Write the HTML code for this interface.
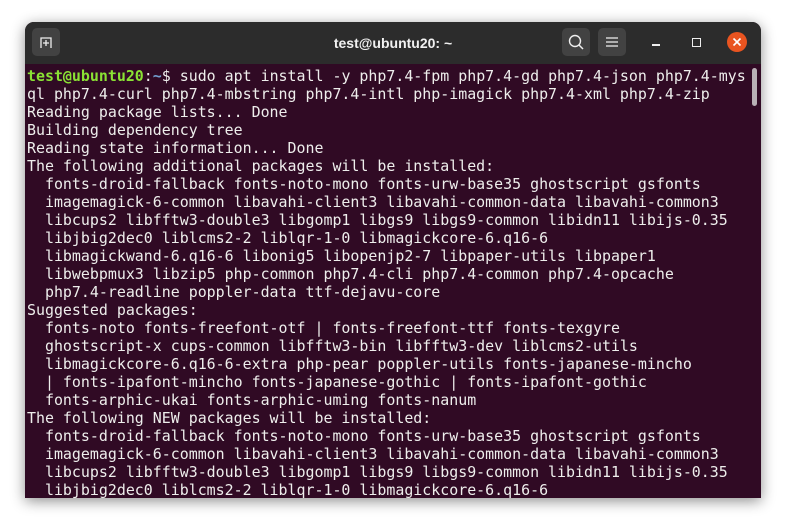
<!DOCTYPE html>
<html><head><style>
html,body{margin:0;padding:0;width:786px;height:527px;background:#fff;overflow:hidden}
.win{position:absolute;left:25px;top:22px;width:736px;height:476px;border-radius:9px 9px 0 0;overflow:hidden;box-shadow:0 3px 14px rgba(0,0,0,.45);background:#300a24}
.tb{height:42px;background:#2c2c2c;position:relative;color:#f2f2f2;font:bold 14px "Liberation Sans",sans-serif}
.title{position:absolute;left:0;right:0;top:13px;text-align:center}
.btn{position:absolute;top:6px;width:28px;height:28px;border-radius:5px;background:#424242}
pre{margin:0;position:absolute;left:2px;top:45px;font:14.93px/18px "DejaVu Sans Mono",monospace;color:#eeeeec;white-space:pre}
.g{color:#8ae234;font-weight:bold}.b{color:#729fcf;font-weight:bold}
.sb{position:absolute;left:727px;top:46px;width:5px;height:38px;border-radius:3px;background:#b8b0b5}
</style></head><body>
<div class="win">
<div class="tb">
<div class="btn" style="left:7px"><svg width="28" height="28"><path d="M9 20V10h10v10" fill="none" stroke="#eee" stroke-width="1.3"/><path d="M14 12v6M11 15h6" stroke="#eee" stroke-width="1.3"/></svg></div>
<div class="title">test@ubuntu20: ~</div>
<div class="btn" style="left:537px"><svg width="28" height="28"><circle cx="13" cy="13" r="5.5" fill="none" stroke="#eee" stroke-width="1.4"/><path d="M17 17l4 4" stroke="#eee" stroke-width="1.5"/></svg></div>
<div class="btn" style="left:573px"><svg width="28" height="28"><path d="M8 10h12M8 14h12M8 18h12" stroke="#eee" stroke-width="1.3"/></svg></div>
<div style="position:absolute;left:627px;top:22px;width:8px;height:1.5px;background:#eee"></div>
<div style="position:absolute;left:667px;top:16px;width:7px;height:7px;border:1.3px solid #eee"></div>
<div style="position:absolute;left:702px;top:10px;width:20px;height:20px;border-radius:50%;background:#e95420"><svg width="20" height="20"><path d="M6.5 6.5l7 7M13.5 6.5l-7 7" stroke="#fff" stroke-width="1.6"/></svg></div>
</div>
<div class="sb"></div>
<pre><span class="g">test@ubuntu20</span>:<span class="b">~</span>$ sudo apt install -y php7.4-fpm php7.4-gd php7.4-json php7.4-mys
ql php7.4-curl php7.4-mbstring php7.4-intl php-imagick php7.4-xml php7.4-zip
Reading package lists... Done
Building dependency tree
Reading state information... Done
The following additional packages will be installed:
  fonts-droid-fallback fonts-noto-mono fonts-urw-base35 ghostscript gsfonts
  imagemagick-6-common libavahi-client3 libavahi-common-data libavahi-common3
  libcups2 libfftw3-double3 libgomp1 libgs9 libgs9-common libidn11 libijs-0.35
  libjbig2dec0 liblcms2-2 liblqr-1-0 libmagickcore-6.q16-6
  libmagickwand-6.q16-6 libonig5 libopenjp2-7 libpaper-utils libpaper1
  libwebpmux3 libzip5 php-common php7.4-cli php7.4-common php7.4-opcache
  php7.4-readline poppler-data ttf-dejavu-core
Suggested packages:
  fonts-noto fonts-freefont-otf | fonts-freefont-ttf fonts-texgyre
  ghostscript-x cups-common libfftw3-bin libfftw3-dev liblcms2-utils
  libmagickcore-6.q16-6-extra php-pear poppler-utils fonts-japanese-mincho
  | fonts-ipafont-mincho fonts-japanese-gothic | fonts-ipafont-gothic
  fonts-arphic-ukai fonts-arphic-uming fonts-nanum
The following NEW packages will be installed:
  fonts-droid-fallback fonts-noto-mono fonts-urw-base35 ghostscript gsfonts
  imagemagick-6-common libavahi-client3 libavahi-common-data libavahi-common3
  libcups2 libfftw3-double3 libgomp1 libgs9 libgs9-common libidn11 libijs-0.35
  libjbig2dec0 liblcms2-2 liblqr-1-0 libmagickcore-6.q16-6</pre>
</div>
</body></html>
